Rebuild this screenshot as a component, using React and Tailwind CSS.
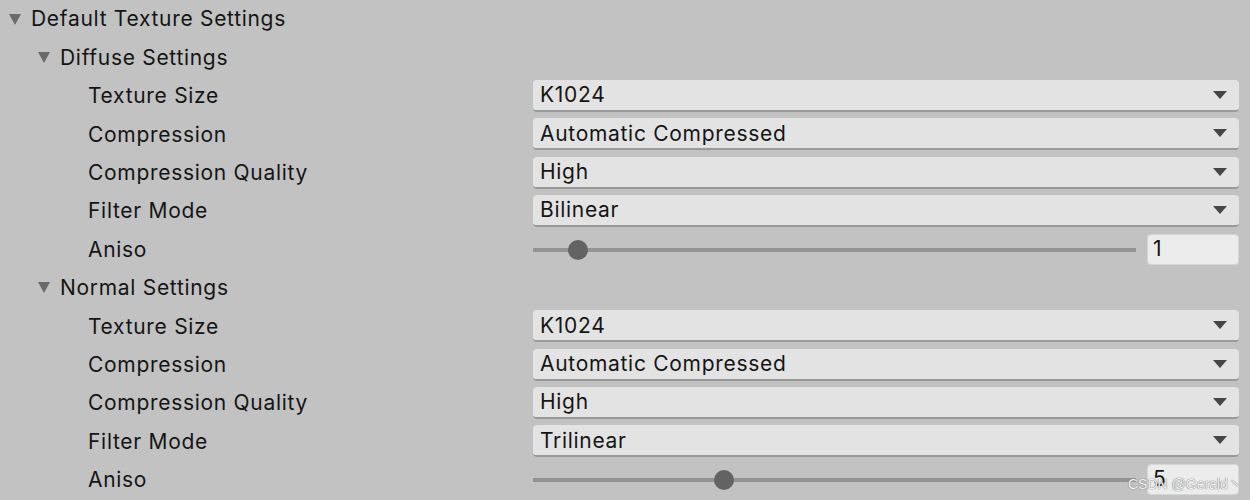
import React from "react";

const font = { fontFamily: "Inter, 'Noto Sans', sans-serif" };
const txt = "text-[21px] tracking-[0.7px] text-[#151515]";

function Fold() {
  return (
    <svg width="12" height="11" viewBox="0 0 12 11" className="shrink-0">
      <polygon points="0,0 12,0 6,11" fill="#6a6a6a" />
    </svg>
  );
}

function Header({ indent, children }) {
  return (
    <div className="h-[38.4px] flex items-center" style={{ paddingLeft: indent }}>
      <Fold />
      <span className={"ml-[10px] " + txt}>{children}</span>
    </div>
  );
}

function Row({ label, children }) {
  return (
    <div className="h-[38.4px] flex items-center">
      <div className={"w-[533px] pl-[88px] " + txt}>{label}</div>
      {children}
    </div>
  );
}

function DropRow({ label, value }) {
  return (
    <Row label={label}>
      <div className="w-[706px] h-[32px] rounded-[4px] bg-[#e3e3e3] border-b-[2px] border-b-[#9a9a9a] flex items-center pl-[7px] pr-[12px]">
        <span className={"flex-1 " + txt}>{value}</span>
        <svg width="14" height="8" viewBox="0 0 14 8">
          <polygon points="0,0 14,0 7,8" fill="#464646" />
        </svg>
      </div>
    </Row>
  );
}

function SliderRow({ label, value, knobX }) {
  return (
    <Row label={label}>
      <div className="w-[603px] h-[32px] relative flex items-center">
        <div className="w-full h-[4px] bg-[#939393]" />
        <div
          className="absolute top-1/2 w-[20px] h-[20px] -mt-[10px] rounded-full bg-[#636363]"
          style={{ left: knobX - 10 }}
        />
      </div>
      <div className={"ml-[11px] w-[92px] h-[31px] rounded-[4px] bg-[#ececec] border border-[#d6d6d6] flex items-center pl-[5px] pb-[2px] " + txt}>
        {value}
      </div>
    </Row>
  );
}

export default function App() {
  return (
    <div className="w-[1250px] h-[500px] bg-[#c2c2c2] overflow-hidden relative" style={font}>
      <Header indent={9}>Default Texture Settings</Header>
      <Header indent={38}>Diffuse Settings</Header>
      <DropRow label="Texture Size" value="K1024" />
      <DropRow label="Compression" value="Automatic Compressed" />
      <DropRow label="Compression Quality" value="High" />
      <DropRow label="Filter Mode" value="Bilinear" />
      <SliderRow label="Aniso" value="1" knobX={45} />
      <Header indent={38}>Normal Settings</Header>
      <DropRow label="Texture Size" value="K1024" />
      <DropRow label="Compression" value="Automatic Compressed" />
      <DropRow label="Compression Quality" value="High" />
      <DropRow label="Filter Mode" value="Trilinear" />
      <SliderRow label="Aniso" value="5" knobX={191} />
      <div
        className="absolute left-[1128px] top-[474px] text-[14px] leading-[20px] text-[#f2f2f2] [text-shadow:0_0_1px_#7a7a7a,0_0_1px_#7a7a7a]"
        style={{ fontFamily: "'Liberation Sans', 'Noto Sans CJK SC', sans-serif" }}
      >
        CSDN @Gerald丶
      </div>
    </div>
  );
}
